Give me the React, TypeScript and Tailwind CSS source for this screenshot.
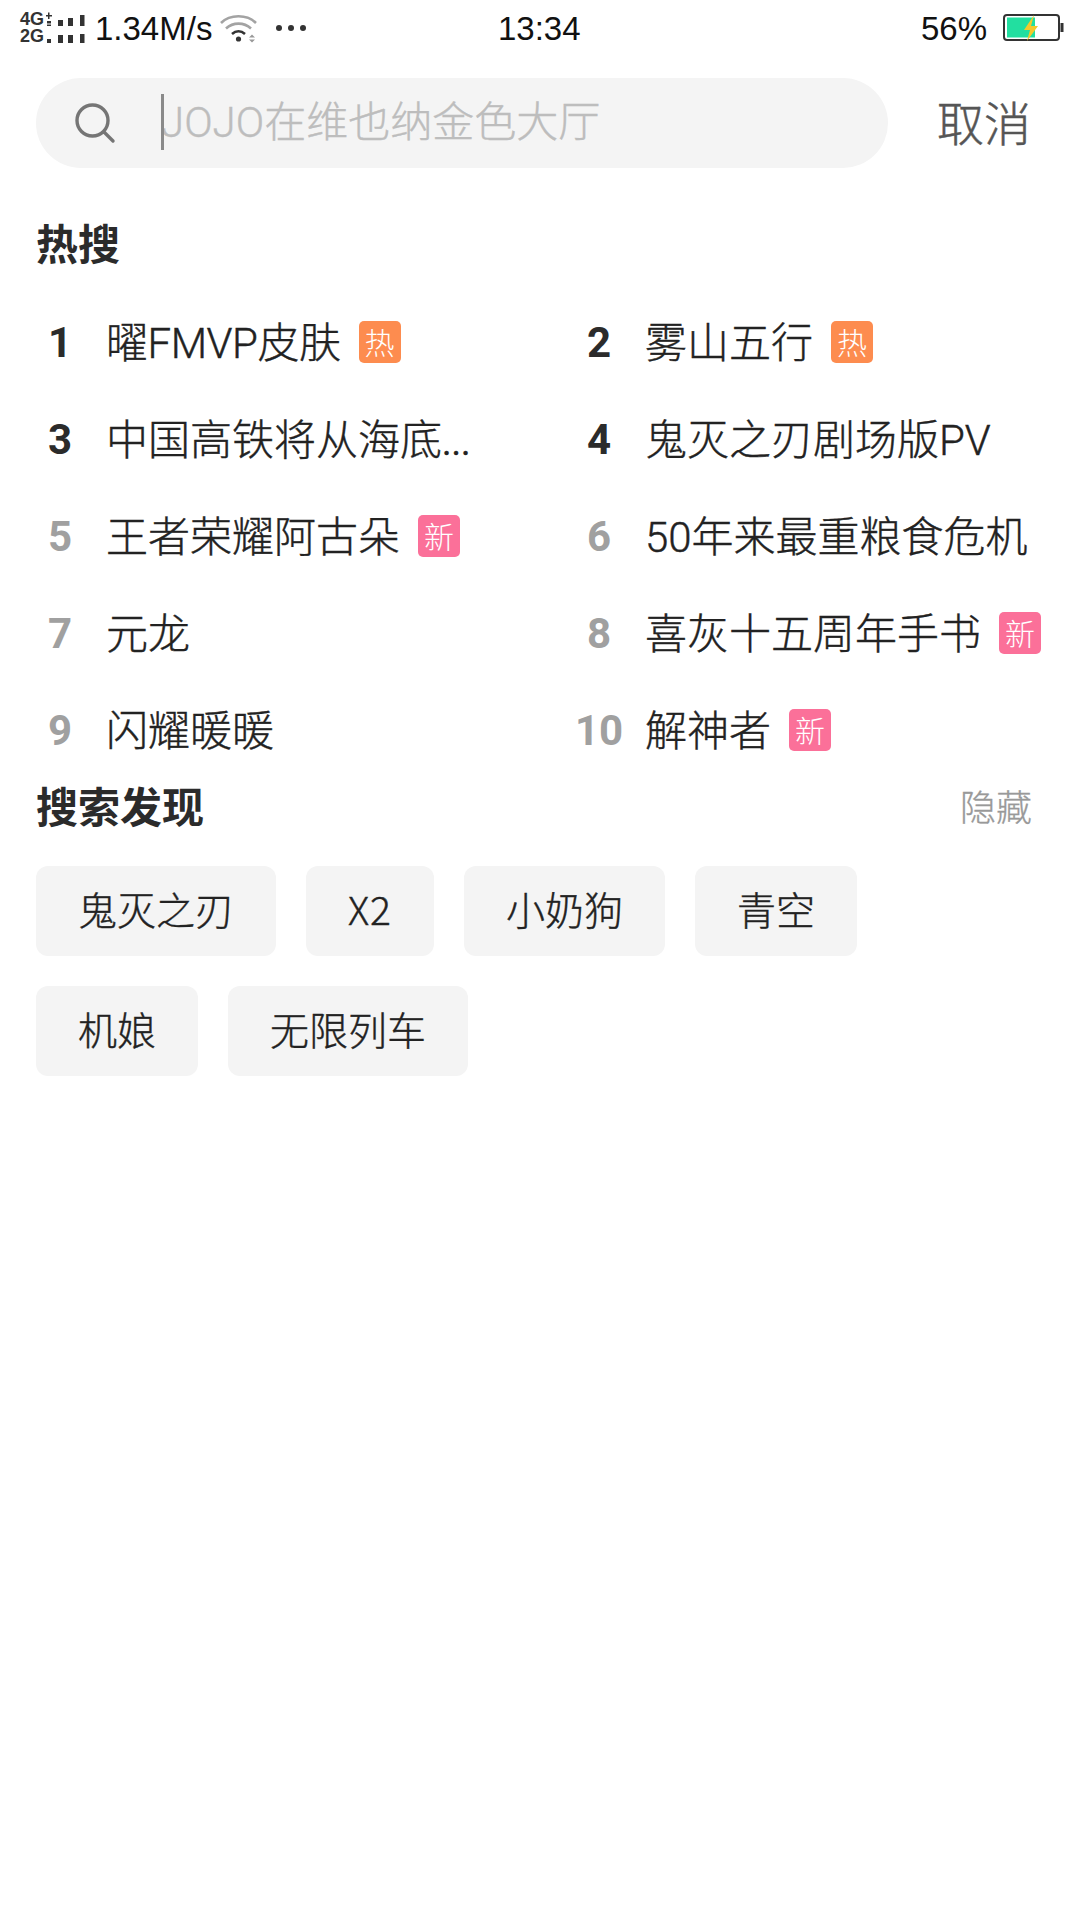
import React from 'react';

const cjk = '"Noto Sans CJK SC", sans-serif';
const mixed = 'Roboto, "Noto Sans CJK SC", sans-serif';
const statusFont = '"Liberation Sans", sans-serif';

const hotItems = [
  { rank: 1, title: '曜FMVP皮肤', badge: '热', dim: false, tight: true },
  { rank: 2, title: '雾山五行', badge: '热', dim: false },
  { rank: 3, title: '中国高铁将从海底', more: true, dim: false },
  { rank: 4, title: '鬼灭之刃剧场版PV', dim: false },
  { rank: 5, title: '王者荣耀阿古朵', badge: '新', dim: true },
  { rank: 6, title: '50年来最重粮食危机', dim: true },
  { rank: 7, title: '元龙', dim: true },
  { rank: 8, title: '喜灰十五周年手书', badge: '新', dim: true },
  { rank: 9, title: '闪耀暖暖', dim: true },
  { rank: 10, title: '解神者', badge: '新', dim: true },
];

const tagRows = [
  ['鬼灭之刃', 'X2', '小奶狗', '青空'],
  ['机娘', '无限列车'],
];

function Signal() {
  return (
    <div className="flex items-center">
      <div className="flex w-[26px] flex-col text-[18px] font-bold text-[#333]" style={{ fontFamily: statusFont }}>
        <span className="h-[17px] leading-[17px]">4G</span>
        <span className="h-[17px] leading-[17px]">2G</span>
      </div>
      <svg width="40" height="32" viewBox="0 0 40 32" fill="#333">
        <path d="M2 0.5h1.5v2.5H6v1.5H3.5V7H2V4.5H0V3h2Z" />
        <rect x="1" y="9" width="4" height="2.5" />
        <rect x="1" y="12.5" width="4" height="1.5" />
        <rect x="1" y="27" width="4" height="4" />
        <rect x="12" y="8" width="5" height="6" />
        <rect x="12" y="23" width="5" height="8" />
        <rect x="22" y="6" width="5" height="8" />
        <rect x="22" y="23" width="5" height="8" />
        <rect x="34" y="3" width="4.5" height="11" />
        <rect x="34" y="22" width="4.5" height="9" />
      </svg>
    </div>
  );
}

function Wifi() {
  return (
    <svg width="38" height="30" viewBox="0 0 38 30" fill="none" className="ml-[8px]">
      <path d="M1 10C10 1 27 1 36 10" stroke="#a3a3a3" strokeWidth="2.6" />
      <path d="M6 15.5C13 9 24 9 31 15.5" stroke="#a3a3a3" strokeWidth="2.6" />
      <path d="M12 21C16 17.5 21 17.5 25 21" stroke="#333" strokeWidth="2.6" />
      <circle cx="18.5" cy="26" r="2.6" fill="#333" />
      <path d="M29 24.5L32 21.5L35 24.5Z M29 26.5L32 29.5L35 26.5Z" fill="#999" />
    </svg>
  );
}

function Battery() {
  return (
    <svg width="61" height="28" viewBox="0 0 61 28">
      <rect x="1" y="1" width="55" height="25" rx="3" fill="#fff" stroke="#333" strokeWidth="2" />
      <rect x="4" y="3.5" width="28" height="20" fill="#22dfa0" />
      <rect x="57.5" y="9" width="3" height="9" fill="#333" />
      <path d="M31 1L21 16H27L24 27L35 12H28Z" fill="#f5c92a" />
    </svg>
  );
}

function StatusBar() {
  return (
    <div className="relative flex h-[56px] items-center justify-between pl-[20px] pr-[16px] text-[#111]" style={{ fontFamily: statusFont }}>
      <div className="flex items-center">
        <Signal />
        <span className="ml-[9px] text-[33px] leading-none">1.34M/s</span>
        <Wifi />
        <span className="ml-[18px] flex gap-[6px]">
          <span className="size-[6px] rounded-full bg-[#333]" />
          <span className="size-[6px] rounded-full bg-[#333]" />
          <span className="size-[6px] rounded-full bg-[#333]" />
        </span>
      </div>
      <span className="absolute left-[498px] text-[33px] leading-none">13:34</span>
      <div className="flex items-center gap-[16px]">
        <span className="text-[33px] leading-none">56%</span>
        <Battery />
      </div>
    </div>
  );
}

function SearchBar() {
  return (
    <div className="mt-[22px] flex items-center pl-[36px]">
      <div className="flex h-[90px] w-[852px] shrink-0 items-center rounded-[45px] bg-[#f4f4f4] pl-[38px]">
        <svg width="42" height="42" viewBox="0 0 42 42" fill="none" stroke="#757575" strokeWidth="3.4">
          <circle cx="18.5" cy="18.5" r="15.5" />
          <path d="M30 30L39 39" strokeLinecap="round" />
        </svg>
        <div className="relative ml-[45px] flex items-center">
          <span className="absolute left-0 top-[-8px] h-[56px] w-[3px] bg-[#8a8a8a]" />
          <span className="text-[42px] font-light leading-none text-[#bdbdbd] [-webkit-text-stroke:0.4px]" style={{ fontFamily: mixed }}>JOJO在维也纳金色大厅</span>
        </div>
      </div>
      <span className="ml-[49px] whitespace-nowrap pb-[5px] text-[47px] font-light leading-none text-[#555] [-webkit-text-stroke:0.5px]">取消</span>
    </div>
  );
}

function Badge({ text }: { text: string }) {
  return (
    <span
      className={`ml-[18px] flex size-[42px] items-center justify-center rounded-[5px] pb-[2px] text-[30px] font-light leading-none text-white ${text === '热' ? 'bg-[#fd8c4f]' : 'bg-[#fb7099]'}`}
    >
      {text}
    </span>
  );
}

function HotRow({ rank, title, badge, more, dim, tight }: { rank: number; title: string; badge?: string; more?: boolean; dim: boolean; tight?: boolean }) {
  return (
    <div className="flex h-[97px] items-center">
      <span
        className={`w-[48px] shrink-0 pt-[2px] text-center text-[42px] font-bold leading-none ${dim ? 'text-[#a0a0a0]' : 'text-[#2b2b2b]'}`}
        style={{ fontFamily: 'Roboto' }}
      >
        {rank}
      </span>
      <span
        className={`ml-[22px] whitespace-nowrap pt-[4px] text-[42px] font-light leading-none text-[#222] [-webkit-text-stroke:0.4px] ${tight ? 'tracking-[-0.45px]' : ''}`}
        style={{ fontFamily: mixed }}
      >
        {title}
        {more && <span className="text-[36px] font-normal">...</span>}
      </span>
      {badge && <Badge text={badge} />}
    </div>
  );
}

export default function App() {
  return (
    <div className="h-[1920px] w-[1080px] overflow-hidden bg-white" style={{ fontFamily: cjk }}>
      <StatusBar />
      <SearchBar />

      <h2 className="mt-[51px] pl-[36px] text-[42px] font-bold leading-[46px] text-[#2b2b2b]">热搜</h2>

      <div className="mt-[28px] grid grid-cols-[539px_1fr] pl-[36px]">
        {hotItems.map((item) => (
          <HotRow key={item.rank} {...item} />
        ))}
      </div>

      <div className="flex items-center justify-between pl-[36px] pr-[48px] pt-[4px]">
        <h2 className="text-[42px] font-bold leading-[46px] text-[#2b2b2b]">搜索发现</h2>
        <span className="text-[36px] font-light leading-none text-[#999] [-webkit-text-stroke:0.3px]">隐藏</span>
      </div>

      <div className="mt-[38px] flex flex-col gap-[30px] pl-[36px]">
        {tagRows.map((row) => (
          <div key={row[0]} className="flex gap-[30px]">
            {row.map((tag) => (
              <span
                key={tag}
                className={`flex h-[90px] items-center rounded-[12px] bg-[#f4f4f4] px-[42px] pb-[5px] text-[39px] font-light leading-none text-[#222] [-webkit-text-stroke:0.4px] ${tag === 'X2' ? 'tracking-[1px]' : ''}`}
              >
                {tag}
              </span>
            ))}
          </div>
        ))}
      </div>
    </div>
  );
}
